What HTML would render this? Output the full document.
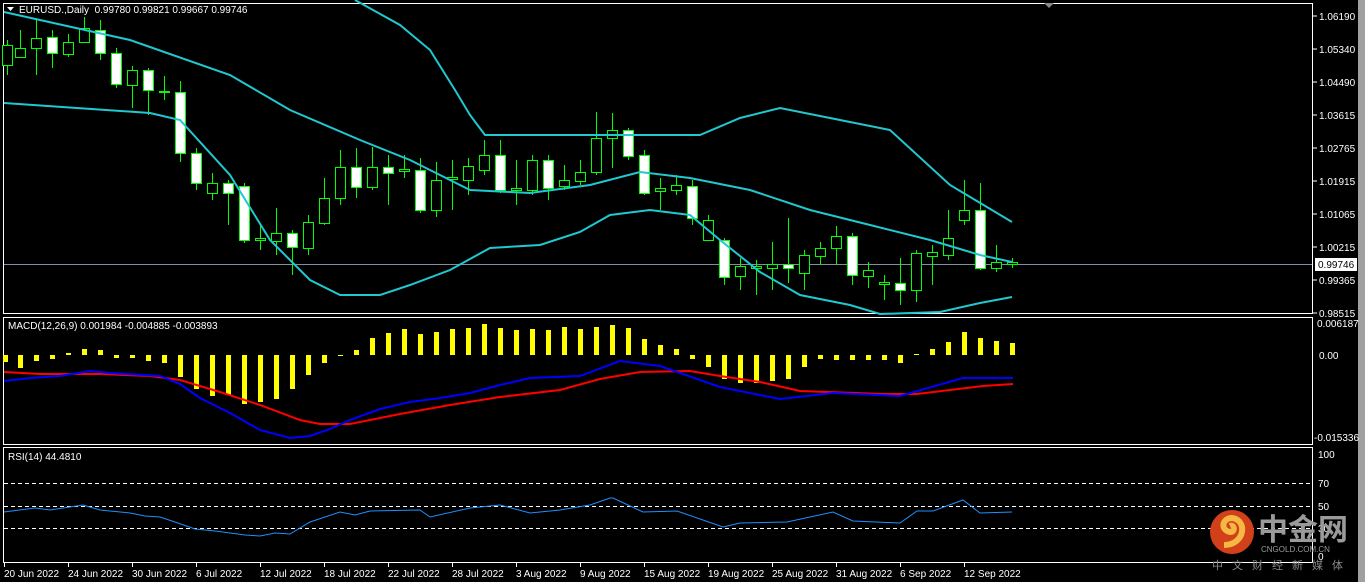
<!DOCTYPE html><html><head><meta charset="utf-8"><style>
body{margin:0;background:#000;width:1365px;height:582px;overflow:hidden;font-family:"Liberation Sans",sans-serif}
svg{position:absolute;left:0;top:0}
</style></head><body>
<svg id="s" width="1365" height="582" xmlns="http://www.w3.org/2000/svg" font-family="Liberation Sans, sans-serif" font-size="10">
<rect width="1365" height="582" fill="#000"/>
<rect x="1358" y="0" width="7" height="582" fill="#a0a0a0"/>
<g fill="none" stroke="#fff" stroke-width="1">
<rect x="3.5" y="3.5" width="1309" height="310"/>
<rect x="3.5" y="317.5" width="1309" height="127"/>
<rect x="3.5" y="447.5" width="1309" height="115"/>
</g>
<line x1="4" y1="264.5" x2="1312" y2="264.5" stroke="#8090a0"/>
<g stroke="#fff" stroke-dasharray="4,3"><line x1="4" y1="483.5" x2="1312" y2="483.5"/><line x1="4" y1="506.5" x2="1312" y2="506.5"/><line x1="4" y1="528.5" x2="1312" y2="528.5"/></g>
<polygon points="1044,3 1054,3 1049,8" fill="#888"/>
<g id="c"></g>
<g fill="none" stroke="#20c8d0" stroke-width="2">
<polyline points="355,0 400,25 430,50 455,90 470,115 485,135 700,135 740,118 780,108 830,118 890,130 950,185 1012,222"/>
<polyline points="4,12 130,40 230,75 290,110 360,140 410,160 470,190 530,193 590,185 640,172 690,178 750,190 810,210 870,225 930,240 980,255 1012,262"/>
<polyline points="4,103 150,113 180,120 230,175 270,240 310,280 340,295 380,295 410,285 450,270 490,248 540,245 580,232 610,215 650,210 690,215 720,240 760,272 800,295 850,305 880,314 940,312 980,303 1012,297"/>
</g>
<g fill="none" stroke-width="2">
<polyline stroke="#f00" points="4,372 40,374 100,374 150,376 180,380 220,392 260,405 300,420 320,424 350,424 400,414 450,405 500,397 560,390 600,379 640,372 690,371 720,376 760,382 800,391 883,394 917,394 983,386 1013,384"/>
<polyline stroke="#00f" points="4,381 30,378 60,376 90,371 110,373 160,376 180,384 200,398 230,413 260,430 290,438 310,436 330,429 350,420 380,409 410,402 440,398 470,393 500,385 530,378 580,376 620,361 660,366 720,387 780,399 833,393 900,396 963,378 1013,378"/>
</g>
<polyline fill="none" stroke="#1e90ff" points="4,512 35,508 50,510 83,505 100,510 130,513 145,516 160,517 175,522 195,529 215,531 245,535 260,536 275,533 290,534 310,522 340,512 355,515 370,511 420,510 430,517 470,508 500,505 530,513 560,510 590,505 610,498 613,498 643,512 677,511 723,527 740,523 787,522 833,512 853,521 900,523 917,511 933,511 963,500 980,513 1012,512"/>
<g fill="#fff">
<text x="19" y="13">EURUSD.,Daily&#160; 0.99780 0.99821 0.99667 0.99746</text>
<text x="8" y="329">MACD(12,26,9) 0.001984 -0.004885 -0.003893</text>
<text x="8" y="460">RSI(14) 44.4810</text>
</g>
<polygon points="7,7 14,7 10.5,11" fill="#fff"/>
<g id="ax" fill="#fff"></g>
<g fill="#fff" id="dt"></g>
<g>
<circle cx="1232" cy="532" r="22" fill="#d2401a"/>
<path d="M1224,545 C1245,545 1248,520 1232,518 C1222,518 1220,530 1230,532 C1236,532 1234,524 1230,526" fill="none" stroke="#f5b842" stroke-width="6"/>
<text x="1258" y="540" font-size="30" font-weight="bold" fill="#9a9a9a" font-family="Noto Sans CJK SC, sans-serif">中金网</text>
<text x="1261" y="552" font-size="8" fill="#9a9a9a">CNGOLD.COM.CN</text>
<text x="1212" y="569" font-size="11" fill="#8a8a8a" letter-spacing="9" font-family="Noto Sans CJK SC, sans-serif">中文财经新媒体</text>
</g>
</svg>
<script>
var c=[[7,45,65,40,75,0],[20,48,57,30,58,0],[36,38,48,20,75,0],[52,37,53,30,68,1],[68,42,54,34,57,0],[84,28,42,17,43,0],[100,30,53,20,60,1],[116,53,84,48,88,1],[132,70,85,66,108,0],[148,70,90,68,115,1],[164,91,92,76,100,0],[180,92,153,81,162,1],[196,153,183,148,190,1],[212,183,193,173,200,0],[228,183,193,180,225,1],[244,186,240,183,243,1],[260,238,240,225,250,0],[276,233,241,208,255,0],[292,233,247,230,275,1],[308,222,248,215,255,0],[324,198,223,178,225,0],[340,167,198,150,205,0],[356,167,187,148,198,1],[372,167,187,147,190,0],[388,167,173,155,205,1],[404,169,171,155,178,0],[420,170,210,158,213,1],[436,180,210,162,217,0],[452,177,179,160,210,0],[468,166,180,158,195,0],[484,155,170,140,175,0],[500,155,190,140,193,1],[516,188,190,160,205,0],[532,160,190,155,195,0],[548,160,188,155,200,1],[564,180,186,165,190,0],[580,172,181,160,185,0],[596,138,172,112,175,0],[612,130,138,113,168,0],[628,130,156,128,160,1],[644,155,193,150,195,1],[660,188,191,178,210,0],[676,185,190,175,195,0],[692,186,218,180,225,1],[708,220,240,215,240,0],[724,240,277,238,285,1],[740,266,276,258,290,0],[756,266,268,260,295,0],[772,264,268,242,290,0],[788,264,268,218,283,1],[804,255,273,250,290,0],[820,248,256,242,265,0],[836,236,248,226,265,0],[852,236,275,233,285,1],[868,270,276,262,288,0],[884,282,284,275,300,0],[900,283,290,258,305,1],[916,253,290,250,302,0],[932,252,256,245,285,0],[948,238,255,210,260,0],[964,210,220,180,225,0],[980,210,268,183,270,1],[996,262,268,245,272,0],[1012,262,264,258,268,0]];
var h="";c.forEach(function(k){var x=k[0];h+='<line x1="'+(x+.5)+'" y1="'+k[3]+'" x2="'+(x+.5)+'" y2="'+k[4]+'" stroke="#0f0"/>';var hh=Math.max(1,k[2]-k[1]);h+='<rect x="'+(x-4.5)+'" y="'+(k[1]+.5)+'" width="10" height="'+hh+'" fill="'+(k[5]?'#fff':'#000')+'" stroke="#0f0"/>';});
var m=[[5,362],[20,368],[36,361],[52,359],[68,353],[84,349],[100,350],[116,358],[132,358],[148,361],[164,363],[180,377],[196,389],[212,396],[228,395],[244,404],[260,402],[276,399],[292,389],[308,375],[324,363],[340,356],[356,350],[372,338],[388,333],[404,329],[420,334],[436,332],[452,329],[468,328],[484,324],[500,328],[516,330],[532,329],[548,330],[564,327],[580,329],[596,327],[612,325],[628,328],[644,339],[660,345],[676,349],[692,359],[708,367],[724,379],[740,383],[756,383],[772,381],[788,379],[804,367],[820,359],[836,360],[852,360],[868,360],[884,360],[900,363],[916,354],[932,349],[948,342],[964,332],[980,338],[996,341],[1012,343]];
m.forEach(function(b){var y0=Math.min(355,b[1]),hh=Math.max(1,Math.abs(b[1]-355));h+='<rect x="'+(b[0]-2)+'" y="'+y0+'" width="5" height="'+hh+'" fill="#ff0"/>';});
document.getElementById('c').innerHTML=h;
var a=[[1.06190,16],[1.05340,49],[1.04490,82],[1.03615,115],[1.02765,148],[1.01915,181],[1.01065,214],[1.00215,247],[0.99365,280],[0.98515,313]],t="";
a.forEach(function(v){t+='<line x1="1313" y1="'+v[1]+'" x2="1317" y2="'+v[1]+'" stroke="#fff"/><text x="1319" y="'+(v[1]+4)+'">'+v[0].toFixed(5)+'</text>';});
t+='<rect x="1315" y="258" width="42" height="13" fill="#fff"/><text x="1318" y="268" fill="#000">0.99746</text>';
t+='<text x="1317" y="327">0.006187</text><text x="1319" y="359">0.00</text><text x="1314" y="441">-0.015336</text>';
[[100,458],[70,487],[50,510],[30,532],[0,560]].forEach(function(v){t+='<text x="1318" y="'+v[1]+'">'+v[0]+'</text>';});
document.getElementById('ax').innerHTML=t;
var d=["20 Jun 2022","24 Jun 2022","30 Jun 2022","6 Jul 2022","12 Jul 2022","18 Jul 2022","22 Jul 2022","28 Jul 2022","3 Aug 2022","9 Aug 2022","15 Aug 2022","19 Aug 2022","25 Aug 2022","31 Aug 2022","6 Sep 2022","12 Sep 2022"],s="";
d.forEach(function(v,i){var x=4+64*i;s+='<line x1="'+(x+.5)+'" y1="563" x2="'+(x+.5)+'" y2="567" stroke="#fff"/><text x="'+x+'" y="577">'+v+'</text>';});
document.getElementById('dt').innerHTML=s;
</script>
</body></html>
